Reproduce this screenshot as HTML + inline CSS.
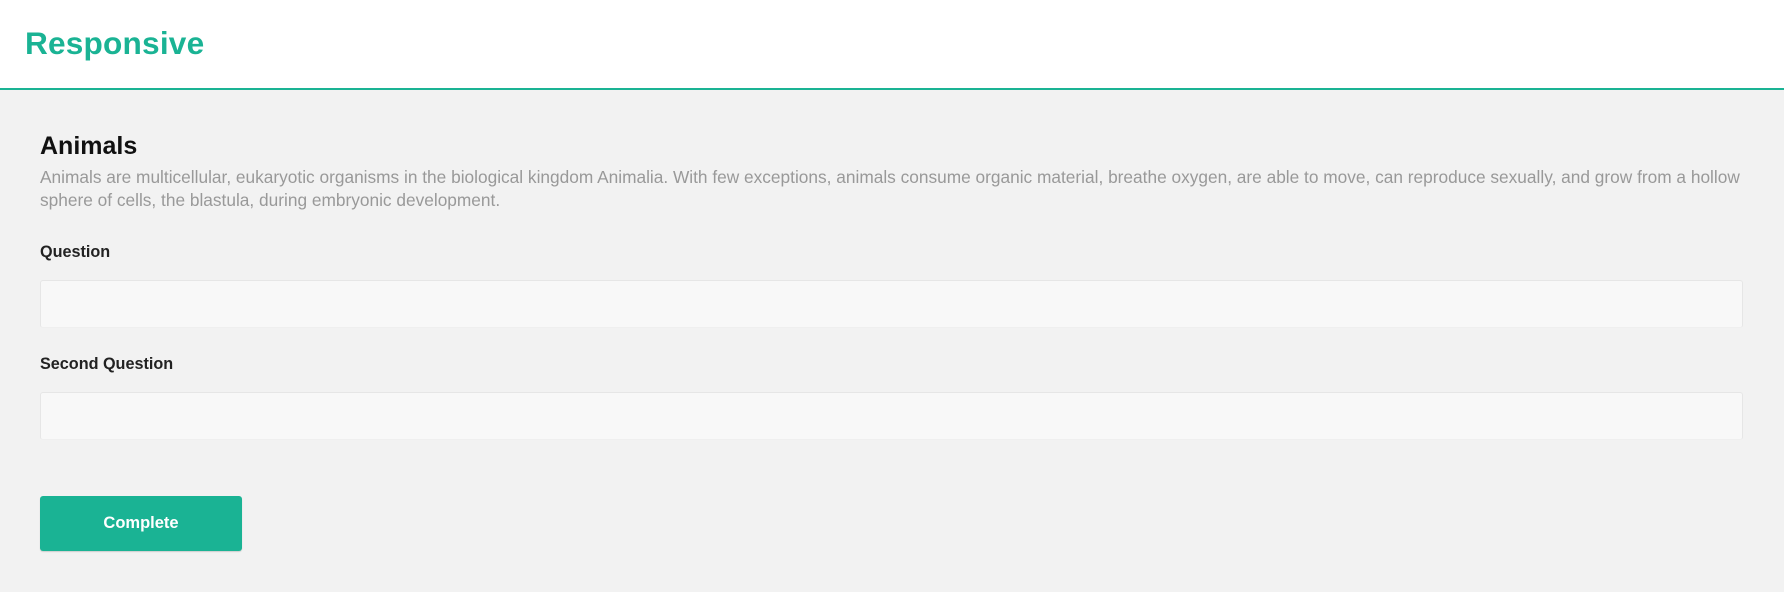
<!DOCTYPE html>
<html><head><style>
body{margin:0;width:1784px;height:592px;background:#f2f2f2;font-family:"Liberation Sans",Arial,sans-serif;overflow:hidden;position:relative}
.hdr{position:absolute;left:0;top:0;width:1784px;height:88px;background:#fff;border-bottom:2px solid #1ab394}
.t{position:absolute;left:25px;top:25px;font-size:31.6px;font-weight:bold;color:#1ab394;letter-spacing:0.2px}
.h{position:absolute;left:40px;top:132px;font-size:25px;font-weight:bold;color:#111}
.d{position:absolute;left:40px;top:166px;font-size:17.3px;line-height:23px;color:#999;white-space:nowrap}
.l{position:absolute;left:40px;font-size:16.2px;font-weight:bold;color:#222}
.i{position:absolute;left:40px;width:1701px;height:46px;background:#f8f8f8;border:1px solid #e6e6e6;border-bottom-color:#efefef;border-radius:3px}
.b{position:absolute;left:40px;top:496px;width:202px;height:55px;background:#1ab394;border-radius:3px;color:#fff;font-weight:bold;font-size:16.5px;line-height:55px;text-align:center;box-shadow:0 1px 1px rgba(0,0,0,.15)}
</style></head><body>
<div class="hdr"><div class="t">Responsive</div></div>
<div class="h">Animals</div>
<div class="d">Animals are multicellular, eukaryotic organisms in the biological kingdom Animalia. With few exceptions, animals consume organic material, breathe oxygen, are able to move, can reproduce sexually, and grow from a hollow<br>sphere of cells, the blastula, during embryonic development.</div>
<div class="l" style="top:243px">Question</div>
<div class="i" style="top:280px"></div>
<div class="l" style="top:355px">Second Question</div>
<div class="i" style="top:392px"></div>
<div class="b">Complete</div>
</body></html>
